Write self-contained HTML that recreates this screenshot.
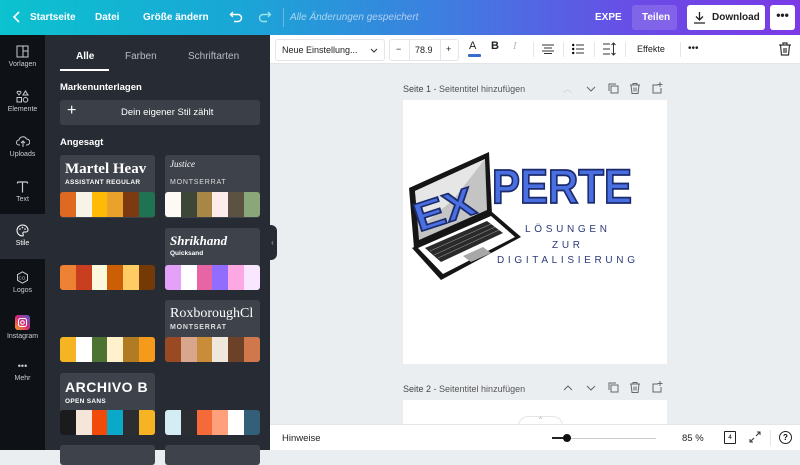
<!DOCTYPE html>
<html><head><meta charset="utf-8">
<style>
*{box-sizing:border-box;margin:0;padding:0}
body{width:800px;height:450px;overflow:hidden;font-family:"Liberation Sans",sans-serif;background:#ebeef1;position:relative}
.a{position:absolute}
.top{left:0;top:0;width:800px;height:35px;background:linear-gradient(90deg,#0cc2cf 0%,#1aa6d6 30%,#3d7fe0 55%,#6a4be6 80%,#7b3ae6 100%);color:#fff;font-size:10px;font-weight:bold}
.nav{left:0;top:35px;width:45px;height:415px;background:#0e1217}
.ni{position:absolute;left:0;width:45px;text-align:center;color:#c9ccd1;font-size:7px}
.ni svg{display:block;margin:0 auto 3px}
.panel{left:45px;top:35px;width:225px;height:415px;background:#272c34;color:#fff}
.card{position:absolute;width:95px;background:#3d424b;border-radius:3px;overflow:hidden}
.sw{position:absolute;height:25px;width:95px;display:flex;border-radius:3px;overflow:hidden}
.sw i{flex:1}
.tb{left:270px;top:35px;width:530px;height:29px;background:#fff;border-bottom:1px solid #e3e5e8;font-size:9px;color:#222}
.bot{left:270px;top:424px;width:530px;height:26px;background:#fff;border-top:1px solid #e3e5e8}
.lbl{font-size:9px;color:#555}
</style></head><body>
<div class="a top">
 <svg class="a" style="left:12px;top:11px" width="10" height="12" viewBox="0 0 10 12"><path d="M7 1L2 6l5 5" stroke="#fff" stroke-width="1.6" fill="none"/></svg>
 <span class="a" style="left:30px;top:12px">Startseite</span>
 <span class="a" style="left:95px;top:12px">Datei</span>
 <span class="a" style="left:143px;top:12px">Größe ändern</span>
 <svg class="a" style="left:229px;top:10px" width="14" height="14" viewBox="0 0 14 14"><path d="M4 2L1.5 4.5 4 7M1.5 4.5H9a3.5 3.5 0 010 7H5" stroke="#fff" stroke-width="1.4" fill="none"/></svg>
 <svg class="a" style="left:258px;top:10px" width="14" height="14" viewBox="0 0 14 14"><path d="M10 2l2.5 2.5L10 7M12.5 4.5H5a3.5 3.5 0 000 7h4" stroke="#cfe" stroke-width="1.4" fill="none" opacity=".7"/></svg>
 <div class="a" style="left:283px;top:8px;width:1px;height:19px;background:rgba(255,255,255,.3)"></div>
 <span class="a" style="left:290px;top:12px;font-weight:normal;font-style:italic;color:rgba(255,255,255,.6)">Alle Änderungen gespeichert</span>
 <span class="a" style="left:595px;top:12px">EXPE</span>
 <div class="a" style="left:632px;top:5px;width:45px;height:25px;background:rgba(255,255,255,.15);border-radius:3px"></div>
 <span class="a" style="left:642px;top:12px">Teilen</span>
 <div class="a" style="left:687px;top:5px;width:78px;height:25px;background:#fff;border-radius:3px;color:#222">
  <svg class="a" style="left:6px;top:6px" width="13" height="13" viewBox="0 0 13 13"><path d="M6.5 1v8M3 5.5l3.5 3.5L10 5.5M1 12h11" stroke="#222" stroke-width="1.3" fill="none"/></svg>
  <span class="a" style="left:25px;top:7px">Download</span></div>
 <div class="a" style="left:770px;top:5px;width:25px;height:25px;background:#fff;border-radius:3px;color:#222;text-align:center;font-size:12px;line-height:20px">•••</div>
</div>

<div class="a nav">
 <div class="ni" style="top:10px"><svg width="13" height="13" viewBox="0 0 13 13"><rect x="1" y="1" width="11" height="11" fill="none" stroke="#c9ccd1"/><path d="M7 1v11M7 6h5" stroke="#c9ccd1"/></svg>Vorlagen</div>
 <div class="ni" style="top:55px"><svg width="13" height="13" viewBox="0 0 13 13"><path d="M3 5L1 2.5a1.3 1.3 0 012-1 1.3 1.3 0 012 1z M9.5 1l2.5 4H7z" fill="none" stroke="#c9ccd1"/><rect x="1" y="7.5" width="4.5" height="4.5" fill="none" stroke="#c9ccd1"/><circle cx="9.5" cy="9.8" r="2.3" fill="none" stroke="#c9ccd1"/></svg>Elemente</div>
 <div class="ni" style="top:100px"><svg width="14" height="13" viewBox="0 0 14 13"><path d="M4 10H3a2.5 2.5 0 010-5 4 4 0 017.5-1A3 3 0 0111 10h-1M7 12V6M5 8l2-2 2 2" fill="none" stroke="#c9ccd1"/></svg>Uploads</div>
 <div class="ni" style="top:145px"><svg width="13" height="13" viewBox="0 0 13 13"><path d="M1.5 2h10M6.5 2v10.5M1.5 2v1.5M11.5 2v1.5" fill="none" stroke="#c9ccd1" stroke-width="1.2"/></svg>Text</div>
 <div class="ni" style="top:179px;height:45px;background:#272c34;padding-top:10px;color:#fff"><svg width="13" height="13" viewBox="0 0 13 13"><path d="M6.5 1a5.5 5.5 0 100 11c1 0 1-1 .5-1.8S7 8 8 8h2a2 2 0 002-2A5.5 5 0 006.5 1z" fill="none" stroke="#fff"/><circle cx="4" cy="5" r=".8" fill="#fff"/><circle cx="6.5" cy="3.5" r=".8" fill="#fff"/><circle cx="9" cy="5" r=".8" fill="#fff"/></svg>Stile</div>
 <div class="ni" style="top:236px"><svg width="13" height="13" viewBox="0 0 13 13"><path d="M6.5 .8l5 2.9v5.6l-5 2.9-5-2.9V3.7z" fill="none" stroke="#c9ccd1"/><text x="6.5" y="8.3" font-size="4.5" fill="#c9ccd1" text-anchor="middle" font-family="Liberation Sans">CO.</text></svg>Logos</div>
 <div class="ni" style="top:280px"><svg width="15" height="15" viewBox="0 0 15 15"><defs><linearGradient id="ig" x1="0" y1="1" x2="1" y2="0"><stop offset="0" stop-color="#f5a623"/><stop offset=".5" stop-color="#d62976"/><stop offset="1" stop-color="#4f5bd5"/></linearGradient></defs><rect width="15" height="15" rx="3" fill="url(#ig)"/><rect x="3.5" y="3.5" width="8" height="8" rx="2" fill="none" stroke="#fff"/><circle cx="7.5" cy="7.5" r="1.8" fill="none" stroke="#fff"/></svg>Instagram</div>
 <div class="ni" style="top:327px"><div style="font-size:9px;line-height:8px;margin-bottom:5px">•••</div>Mehr</div>
</div>

<div class="a panel">
 <span class="a" style="left:31px;top:16px;font-size:10px;font-weight:bold">Alle</span>
 <div class="a" style="left:15px;top:34px;width:49px;height:2px;background:#fff"></div>
 <span class="a" style="left:80px;top:16px;font-size:10px;color:#b8bcc2">Farben</span>
 <span class="a" style="left:143px;top:16px;font-size:10px;color:#b8bcc2">Schriftarten</span>
 <span class="a" style="left:15px;top:47px;font-size:9.5px;font-weight:bold">Markenunterlagen</span>
 <div class="a" style="left:15px;top:65px;width:200px;height:25px;background:#3a3f48;border-radius:3px">
  <span class="a" style="left:7px;top:2px;font-size:16px;font-weight:300">+</span>
  <span class="a" style="left:61px;top:7px;font-size:9.5px">Dein eigener Stil zählt</span></div>
 <span class="a" style="left:15px;top:102px;font-size:9.5px;font-weight:bold">Angesagt</span>

 <div class="card" style="left:15px;top:120px;height:63px"><span class="a" style="left:5px;top:6px;font-family:'Liberation Serif',serif;font-weight:bold;font-size:15px;white-space:nowrap">Martel Heav</span><span class="a" style="left:5px;top:24px;font-size:6.5px;font-weight:bold;letter-spacing:.3px">ASSISTANT REGULAR</span></div>
 <div class="sw" style="left:15px;top:157px"><i style="background:#de6a22"></i><i style="background:#f6f3e8"></i><i style="background:#ffb907"></i><i style="background:#eaa22c"></i><i style="background:#7b3a12"></i><i style="background:#1f7352"></i></div>
 <div class="card" style="left:120px;top:120px;height:63px"><span class="a" style="left:5px;top:4px;font-family:'Liberation Serif',serif;font-style:italic;font-size:9px">Justice</span><span class="a" style="left:5px;top:24px;font-size:7px;letter-spacing:.8px;color:#ddd">MONTSERRAT</span></div>
 <div class="sw" style="left:120px;top:157px"><i style="background:#fdf9f4"></i><i style="background:#3e4638"></i><i style="background:#a88646"></i><i style="background:#fdeceb"></i><i style="background:#5c5241"></i><i style="background:#8aa77a"></i></div>

 <div class="sw" style="left:15px;top:230px"><i style="background:#ee8234"></i><i style="background:#c83e1e"></i><i style="background:#fbf8dc"></i><i style="background:#cc5f05"></i><i style="background:#ffcb63"></i><i style="background:#733a05"></i></div>
 <div class="card" style="left:120px;top:193px;height:62px"><span class="a" style="left:5px;top:5px;font-family:'Liberation Serif',serif;font-weight:bold;font-style:italic;font-size:13px">Shrikhand</span><span class="a" style="left:5px;top:22px;font-size:6.5px;font-weight:bold">Quicksand</span></div>
 <div class="sw" style="left:120px;top:230px"><i style="background:#e3a1f9"></i><i style="background:#fff"></i><i style="background:#e765a5"></i><i style="background:#916dfd"></i><i style="background:#fea8e3"></i><i style="background:#f8e7fe"></i></div>

 <div class="sw" style="left:15px;top:302px"><i style="background:#f5b522"></i><i style="background:#fff"></i><i style="background:#4c7331"></i><i style="background:#fef1cc"></i><i style="background:#b07b23"></i><i style="background:#f69a1b"></i></div>
 <div class="card" style="left:120px;top:265px;height:62px"><span class="a" style="left:5px;top:6px;font-family:'Liberation Serif',serif;font-size:14px;white-space:nowrap">RoxboroughCl</span><span class="a" style="left:5px;top:24px;font-size:7px;letter-spacing:.8px;color:#ddd;font-weight:bold">MONTSERRAT</span></div>
 <div class="sw" style="left:120px;top:302px"><i style="background:#994a22"></i><i style="background:#d8a58d"></i><i style="background:#c98c38"></i><i style="background:#efe6dc"></i><i style="background:#6c4128"></i><i style="background:#d0784c"></i></div>

 <div class="card" style="left:15px;top:338px;height:62px"><span class="a" style="left:5px;top:6px;font-weight:bold;font-size:14px;letter-spacing:.5px;white-space:nowrap">ARCHIVO B</span><span class="a" style="left:5px;top:25px;font-size:6.5px;font-weight:bold;letter-spacing:.3px">OPEN SANS</span></div>
 <div class="sw" style="left:15px;top:375px"><i style="background:#1b1b1d"></i><i style="background:#f6e6da"></i><i style="background:#f34a0a"></i><i style="background:#0aa9c9"></i><i style="background:#2c2d30"></i><i style="background:#f6b424"></i></div>
 <div class="sw" style="left:120px;top:375px"><i style="background:#d4edf5"></i><i style="background:#2c2d30"></i><i style="background:#f56a39"></i><i style="background:#fea17a"></i><i style="background:#fff"></i><i style="background:#335f78"></i></div>
 <div class="card" style="left:15px;top:410px;height:20px"></div>
 <div class="card" style="left:120px;top:410px;height:20px"></div>
</div>
<div class="a" style="left:268px;top:225px;width:9px;height:35px;background:#272c34;border-radius:0 6px 6px 0;color:#aaa;font-size:8px;line-height:35px;text-align:center">‹</div>

<div class="a tb">
 <div class="a" style="left:5px;top:4px;width:110px;height:22px;border:1px solid #e3e5e8;border-radius:3px"><span class="a" style="left:6px;top:5px">Neue Einstellung...</span><svg class="a" style="left:94px;top:8px" width="8" height="6" viewBox="0 0 8 6"><path d="M1 1l3 3 3-3" stroke="#333" fill="none"/></svg></div>
 <div class="a" style="left:119px;top:4px;width:70px;height:22px;border:1px solid #e3e5e8;border-radius:3px"><span class="a" style="left:6px;top:4px">−</span><div class="a" style="left:19px;top:0;width:1px;height:20px;background:#e3e5e8"></div><span class="a" style="left:25px;top:5px">78.9</span><div class="a" style="left:50px;top:0;width:1px;height:20px;background:#e3e5e8"></div><span class="a" style="left:56px;top:4px">+</span></div>
 <span class="a" style="left:199px;top:5px;font-size:11px">A</span><div class="a" style="left:198px;top:19px;width:13px;height:3px;background:#3a6cc9;border-radius:1px"></div>
 <span class="a" style="left:221px;top:5px;font-size:11px;font-weight:bold">B</span>
 <span class="a" style="left:243px;top:5px;font-size:11px;font-style:italic;color:#bbb;font-family:'Liberation Serif',serif">I</span>
 <div class="a" style="left:263px;top:7px;width:1px;height:15px;background:#e3e5e8"></div>
 <svg class="a" style="left:272px;top:9px" width="12" height="10" viewBox="0 0 12 10"><path d="M0 1h12M2 4h8M0 7h12M2 9.5h8" stroke="#333"/></svg>
 <div class="a" style="left:293px;top:7px;width:1px;height:15px;background:#e3e5e8"></div>
 <svg class="a" style="left:302px;top:8px" width="12" height="12" viewBox="0 0 12 12"><circle cx="1.2" cy="2" r="1.2"/><circle cx="1.2" cy="6" r="1.2"/><circle cx="1.2" cy="10" r="1.2"/><path d="M4 2h8M4 6h8M4 10h8" stroke="#333"/></svg>
 <div class="a" style="left:324px;top:7px;width:1px;height:15px;background:#e3e5e8"></div>
 <svg class="a" style="left:333px;top:7px" width="13" height="14" viewBox="0 0 13 14"><path d="M0 2h7M0 7h7M0 12h7M10.5 1v12M8.5 3l2-2 2 2M8.5 11l2 2 2-2" stroke="#333" fill="none"/></svg>
 <div class="a" style="left:355px;top:7px;width:1px;height:15px;background:#e3e5e8"></div>
 <span class="a" style="left:367px;top:9px">Effekte</span>
 <div class="a" style="left:410px;top:7px;width:1px;height:15px;background:#e3e5e8"></div>
 <span class="a" style="left:418px;top:8px;font-size:10px">•••</span>
 <svg class="a" style="left:509px;top:7px" width="12" height="14" viewBox="0 0 12 14"><path d="M0 3h12M4 3V1h4v2M1.5 3l1 10h7l1-10M5 6v5M7 6v5" stroke="#333" fill="none" stroke-width="1.2"/></svg>
</div>

<span class="a lbl" style="left:403px;top:84px"><b style="font-weight:normal;color:#444">Seite 1</b> - Seitentitel hinzufügen</span>
<span class="a lbl" style="left:563px;top:82px;color:#ccc">︿</span>
<svg class="a" style="left:586px;top:86px" width="10" height="6" viewBox="0 0 10 6"><path d="M1 1l4 4 4-4" stroke="#666" fill="none"/></svg>
<svg class="a" style="left:608px;top:83px" width="11" height="11" viewBox="0 0 11 11"><rect x="3" y="3" width="7" height="7" fill="none" stroke="#666"/><path d="M1 8V1h7" stroke="#666" fill="none"/></svg>
<svg class="a" style="left:630px;top:83px" width="10" height="11" viewBox="0 0 10 11"><path d="M0 2h10M3 2V.5h4V2M1 2l1 8.5h6L9 2M4 4.5v4M6 4.5v4" stroke="#666" fill="none"/></svg>
<svg class="a" style="left:652px;top:82px" width="11" height="12" viewBox="0 0 11 12"><path d="M6 3H1v8h8V6M8 0v5M5.5 2.5h5" stroke="#666" fill="none"/></svg>

<div class="a" style="left:403px;top:100px;width:264px;height:264px;background:#fff">
 <svg class="a" style="left:0;top:0" width="264" height="264" viewBox="0 0 264 264">
  <!-- screen -->
  <path d="M6 88L86 52 89 114 11 148z" fill="#151515"/>
  <path d="M12 91L82 59 84 110 16 140z" fill="#c4c4c4"/>
  <path d="M12 91L82 59 50 100 16 128z" fill="#e6e6e6"/>
  <!-- base -->
  <path d="M9 148L89 112 118 137 38 180z" fill="#151515"/>
  <path d="M15 148L88 116 112 137 40 174z" fill="#fff"/>
  <path d="M22 148L84 121 100 133 38 162z" fill="#2a2a2a"/>
  <g stroke="#fff" stroke-width=".5" opacity=".6"><path d="M27 151L88 124M31 155L92 127M35 158L96 130"/></g>
  <path d="M60 156L80 147 88 153 68 162z" fill="#a8a8a8"/>
  <text x="0" y="0" font-family="Liberation Sans" font-weight="bold" font-size="40" fill="#4a6fe0" stroke="#1b2a6b" stroke-width="1.6" textLength="62" lengthAdjust="spacingAndGlyphs" transform="translate(16 132) rotate(-18)">EX</text>
  <text x="89" y="103" font-family="Liberation Sans" font-weight="bold" font-size="48" fill="#4a6fe0" stroke="#1b2a6b" stroke-width="1.8" textLength="140" lengthAdjust="spacingAndGlyphs">PERTE</text>
  <text x="163" y="132" font-family="Liberation Sans" font-size="10" fill="#2b3a7a" text-anchor="middle" textLength="82" lengthAdjust="spacing">LÖSUNGEN</text>
  <text x="163" y="148" font-family="Liberation Sans" font-size="10" fill="#2b3a7a" text-anchor="middle" textLength="28" lengthAdjust="spacing">ZUR</text>
  <text x="163" y="163" font-family="Liberation Sans" font-size="10" fill="#2b3a7a" text-anchor="middle" textLength="138" lengthAdjust="spacing">DIGITALISIERUNG</text>
 </svg>
</div>

<span class="a lbl" style="left:403px;top:384px"><b style="font-weight:normal;color:#444">Seite 2</b> - Seitentitel hinzufügen</span>
<svg class="a" style="left:563px;top:385px" width="10" height="6" viewBox="0 0 10 6"><path d="M1 5l4-4 4 4" stroke="#666" fill="none"/></svg>
<svg class="a" style="left:586px;top:385px" width="10" height="6" viewBox="0 0 10 6"><path d="M1 1l4 4 4-4" stroke="#666" fill="none"/></svg>
<svg class="a" style="left:608px;top:382px" width="11" height="11" viewBox="0 0 11 11"><rect x="3" y="3" width="7" height="7" fill="none" stroke="#666"/><path d="M1 8V1h7" stroke="#666" fill="none"/></svg>
<svg class="a" style="left:630px;top:382px" width="10" height="11" viewBox="0 0 10 11"><path d="M0 2h10M3 2V.5h4V2M1 2l1 8.5h6L9 2M4 4.5v4M6 4.5v4" stroke="#666" fill="none"/></svg>
<svg class="a" style="left:652px;top:381px" width="11" height="12" viewBox="0 0 11 12"><path d="M6 3H1v8h8V6M8 0v5M5.5 2.5h5" stroke="#666" fill="none"/></svg>
<div class="a" style="left:403px;top:400px;width:264px;height:30px;background:#fff"></div>
<div class="a" style="left:518px;top:416px;width:45px;height:12px;background:#fff;border-radius:10px 10px 0 0;border:1px solid #e3e5e8;border-bottom:none;text-align:center;font-size:6px;color:#999">^</div>

<div class="a bot">
 <span class="a" style="left:12px;top:8px;font-size:9.5px;color:#222">Hinweise</span>
 <div class="a" style="left:282px;top:12px;width:16px;height:2px;background:#222"></div>
 <div class="a" style="left:298px;top:12.5px;width:88px;height:1px;background:#ccc"></div>
 <div class="a" style="left:293px;top:9px;width:8px;height:8px;border-radius:50%;background:#111"></div>
 <span class="a" style="left:412px;top:8px;font-size:9.5px;color:#222">85 %</span>
 <div class="a" style="left:454px;top:6px;width:12px;height:13px;border:1.3px solid #222;font-size:6.5px;text-align:center;line-height:11px;border-radius:1px">4</div>
 <svg class="a" style="left:479px;top:6px" width="12" height="12" viewBox="0 0 12 12"><path d="M7 5l4-4M8 1h3v3M5 7l-4 4M1 8v3h3" stroke="#333" fill="none"/></svg>
 <div class="a" style="left:500px;top:5px;width:1px;height:16px;background:#e3e5e8"></div>
 <div class="a" style="left:509px;top:6px;width:13px;height:13px;border:1.3px solid #222;border-radius:50%;font-size:8px;text-align:center;line-height:11px;font-weight:bold">?</div>
</div>
</body></html>
